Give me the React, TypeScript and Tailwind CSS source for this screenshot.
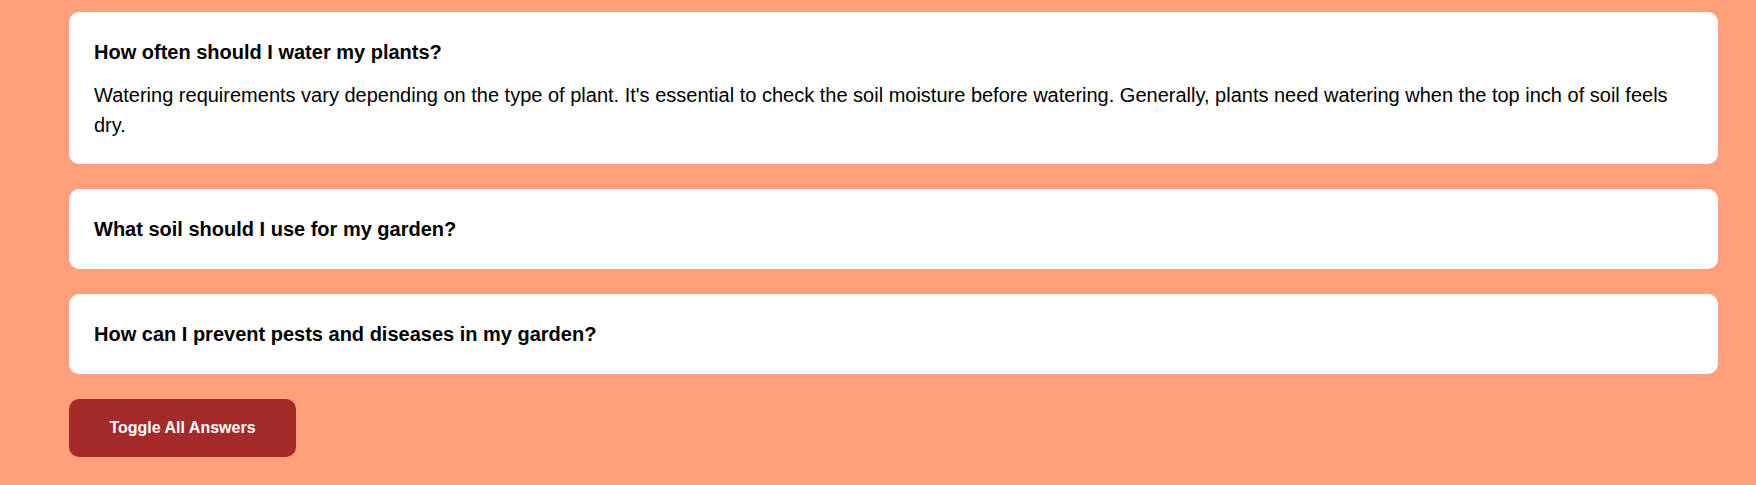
import { useState } from 'react';

const faqs = [
  {
    q: 'How often should I water my plants?',
    a: "Watering requirements vary depending on the type of plant. It's essential to check the soil moisture before watering. Generally, plants need watering when the top inch of soil feels dry.",
  },
  {
    q: 'What soil should I use for my garden?',
    a: 'Most gardens do well with loamy, well-draining soil rich in organic matter. Mixing in compost improves structure and nutrients.',
  },
  {
    q: 'How can I prevent pests and diseases in my garden?',
    a: 'Rotate crops, keep plants well spaced for airflow, remove diseased leaves promptly and encourage beneficial insects.',
  },
];

const App = () => {
  const [open, setOpen] = useState<boolean[]>([true, false, false]);

  const toggleOne = (i: number) =>
    setOpen((val) => val.map((v, j) => (j === i ? !v : v)));

  const toggleAll = () =>
    setOpen((val) => {
      const anyClosed = val.some((v) => !v);
      return val.map(() => anyClosed);
    });

  return (
    <div className="min-h-[485px] w-full bg-[#ffa07a] pt-3 pb-7 font-['Liberation_Sans',Arial,sans-serif] text-black">
      <div className="ml-[69px] w-[1649px] flex flex-col gap-[25px]">
        {faqs.map((item, i) => (
          <div key={item.q} className="bg-white rounded-[10px] px-[25px] py-6">
            <h3
              className="text-[20px] leading-[32px] font-bold cursor-pointer"
              onClick={() => toggleOne(i)}
            >
              {item.q}
            </h3>
            {open[i] && (
              <p className="mt-3 text-[20px] leading-[30px]">{item.a}</p>
            )}
          </div>
        ))}
        <div>
          <button
            type="button"
            onClick={toggleAll}
            className="h-[58px] w-[227px] rounded-[10px] bg-[#a52a2a] text-white text-[16px] font-bold"
          >
            Toggle All Answers
          </button>
        </div>
      </div>
    </div>
  );
};

export default App;
